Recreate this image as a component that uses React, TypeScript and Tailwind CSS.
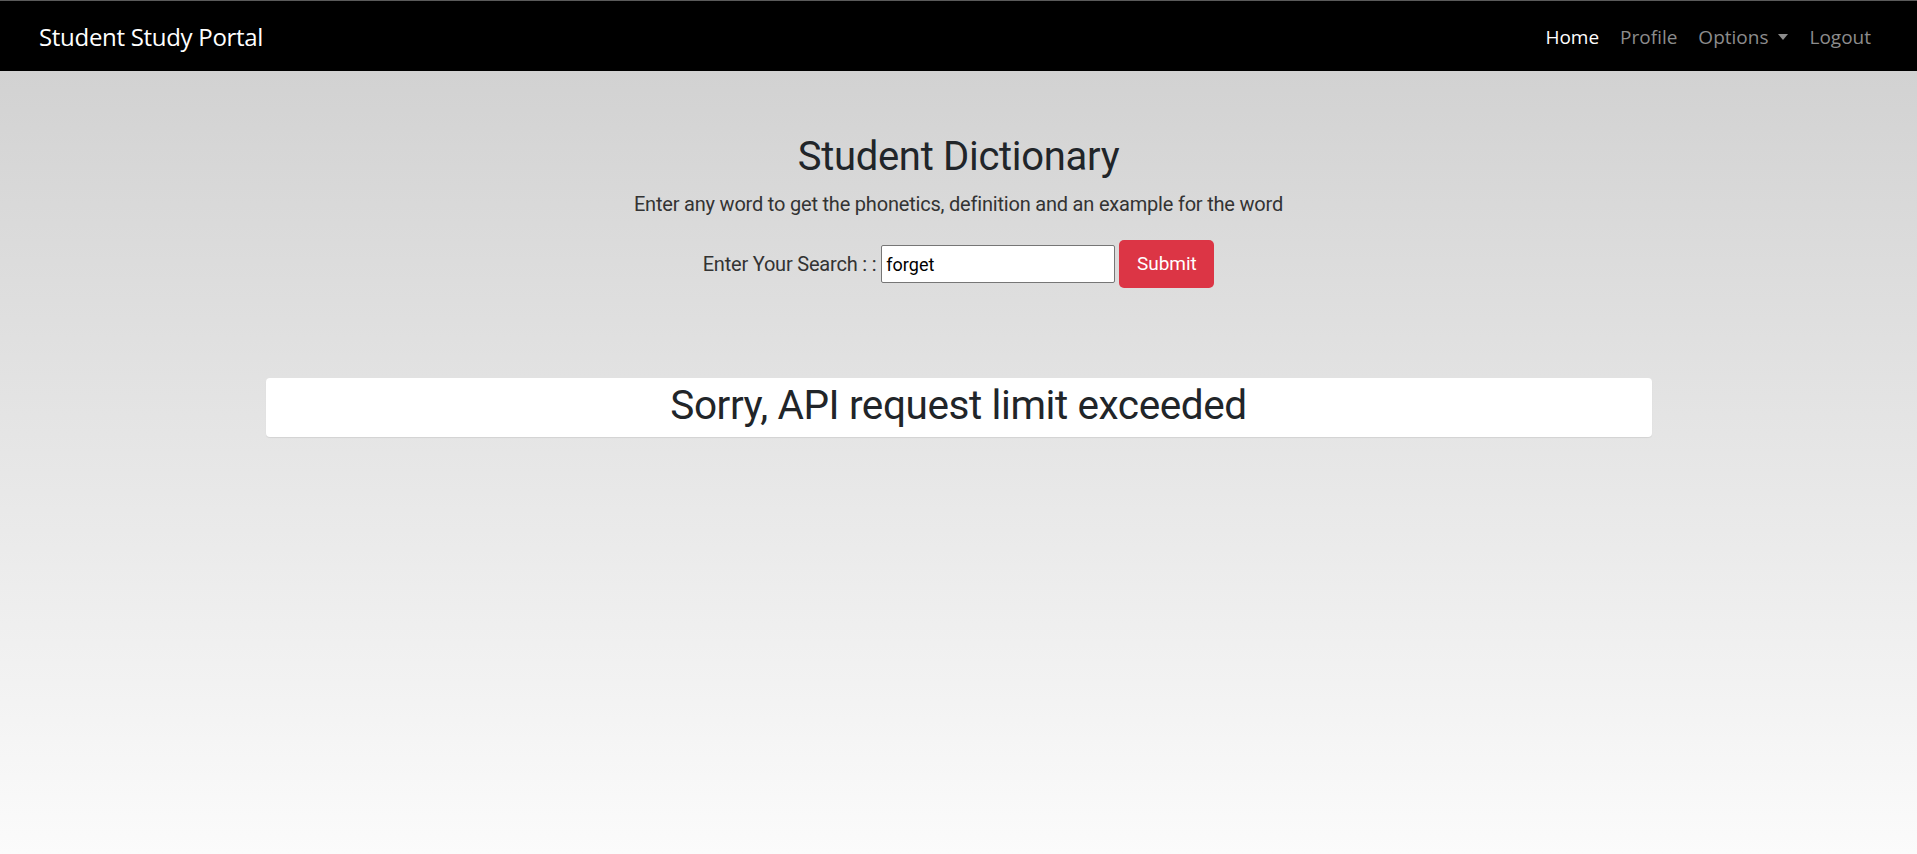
import { useState } from "react";

const navLinks = [
  { label: "Home", active: true },
  { label: "Profile" },
  { label: "Options", dropdown: true },
  { label: "Logout" },
];

export default function App() {
  const [word, setWord] = useState("forget");

  return (
    <div className="min-h-[854px] flex flex-col font-['Roboto',sans-serif] text-[#212529]">
      {/* Navbar */}
      <nav className="h-[71px] shrink-0 bg-black border-t border-[#5a5a5a] flex items-center justify-between pl-[39px] pr-[46px] pt-[2px] font-['Open_Sans',sans-serif]">
        <a className="text-white text-[24px] tracking-[-0.3px]">Student Study Portal</a>
        <ul className="flex items-center gap-[21px] text-[19px]">
          {navLinks.map((l) => (
            <li
              key={l.label}
              className={`flex items-center ${l.active ? "text-white" : "text-[#8c8c8c]"}`}
            >
              {l.label}
              {l.dropdown && (
                <span className="ml-[10px] inline-block w-0 h-0 border-x-[5px] border-x-transparent border-t-[6px] border-t-[#8c8c8c]" />
              )}
            </li>
          ))}
        </ul>
      </nav>

      {/* Dictionary */}
      <main className="flex-1 flex flex-col items-center bg-linear-to-b/srgb from-[#d2d2d2] to-[#fbfbfb]">
        <h1 className="mt-[62px] text-[40px] leading-[48px] tracking-[-0.3px]">Student Dictionary</h1>
        <p className="mt-[10px] text-[20px] leading-[26px] tracking-[-0.2px] text-[#333]">
          Enter any word to get the phonetics, definition and an example for the word
        </p>
        <form
          className="mt-[23px] flex items-center"
          onSubmit={(e) => e.preventDefault()}
        >
          <label className="text-[20px] tracking-[-0.2px] text-[#333] mr-[5px]">Enter Your Search : :</label>
          <input
            value={word}
            onChange={(e) => setWord(e.target.value)}
            className="w-[234px] h-[38px] bg-white border border-[#767676] rounded-[2px] px-[4px] text-[18px] text-black outline-none"
          />
          <button className="ml-[4px] w-[95px] h-[48px] bg-[#dc3545] text-white text-[19px] rounded-[5px]">
            Submit
          </button>
        </form>

        <div className="mt-[90px] w-[1386px] h-[59px] pb-[5px] bg-white rounded-[4px] shadow-[0_1px_1px_rgba(0,0,0,0.08)] flex items-center justify-center">
          <h2 className="text-[40.5px] leading-[50px] tracking-[-0.4px]">Sorry, API request limit exceeded</h2>
        </div>
      </main>
    </div>
  );
}
